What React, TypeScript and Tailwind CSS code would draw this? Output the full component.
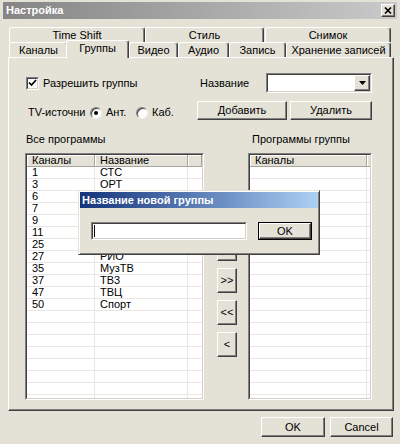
import React from 'react';

const raised =
    'border border-t-white border-l-white border-r-[#404040] border-b-[#404040] shadow-[inset_-1px_-1px_0_#808080]';
const sunkenOuter = 'border border-t-[#808080] border-l-[#808080] border-r-white border-b-white';
const sunkenInner = 'border border-t-[#404040] border-l-[#404040] border-r-[#d4d0c8] border-b-[#d4d0c8]';

// names of rows 6..25 sit under the prompt dialog, so they are left empty
const channels = [
    { num: '1', name: 'СТС' },
    { num: '3', name: 'ОРТ' },
    { num: '6', name: '' },
    { num: '7', name: '' },
    { num: '9', name: '' },
    { num: '11', name: '' },
    { num: '25', name: '' },
    { num: '27', name: 'РИО' },
    { num: '35', name: 'МузТВ' },
    { num: '37', name: 'ТВ3' },
    { num: '47', name: 'ТВЦ' },
    { num: '50', name: 'Спорт' },
];

function Button({ w, h = 'h-[20px]', children }: { w: string; h?: string; children: React.ReactNode }) {
    return (
        <div className={`${w} ${h} ${raised} bg-[#e4e2d7] flex items-center justify-center shrink-0`}>{children}</div>
    );
}

function Tab({ w, selected, children }: { w: string; selected?: boolean; children: React.ReactNode }) {
    return (
        <div
            className={`${w} ${
                selected ? 'h-[18px] -mb-px -mx-[2px] relative z-10 pb-[2px]' : 'h-[15px]'
            } shrink-0 bg-[#e4e2d7] border-t border-l border-r border-t-white border-l-white border-r-[#404040] shadow-[inset_-1px_0_0_#808080] rounded-t-[3px] flex items-center justify-center`}
        >
            {children}
        </div>
    );
}

function Checkbox() {
    return (
        <div className={`w-[13px] h-[13px] ${sunkenOuter} shrink-0`}>
            <div className={`w-full h-full bg-white ${sunkenInner} flex items-center justify-center`}>
                <svg width="9" height="8" viewBox="0 0 9 8">
                    <path d="M1 3.5 L3.5 6 L8 1" fill="none" stroke="#000" strokeWidth="1.7" />
                </svg>
            </div>
        </div>
    );
}

function Radio({ checked }: { checked?: boolean }) {
    return (
        <div className="w-[12px] h-[12px] rounded-full bg-white border border-t-[#808080] border-l-[#808080] border-r-[#f0f0f0] border-b-[#f0f0f0] shadow-[inset_1px_1px_0_#404040] flex items-center justify-center shrink-0">
            {checked && <div className="w-[4px] h-[4px] rounded-full bg-black" />}
        </div>
    );
}

function HeaderCell({ w, children }: { w: string; children?: React.ReactNode }) {
    return (
        <div className={`${w} h-full shrink-0 bg-[#e4e2d7] border-r border-b border-r-[#a8a69c] border-b-[#a8a69c] shadow-[inset_1px_1px_0_white] pl-[5px] flex items-center leading-none`}>
            {children}
        </div>
    );
}

function LeftList() {
    const rows = [...channels, ...Array.from({ length: 8 }, () => ({ num: '', name: '' }))];
    return (
        <div className={`w-[179px] h-full ${sunkenOuter} shrink-0`}>
            <div className={`h-full bg-white ${sunkenInner} overflow-hidden flex flex-col`}>
                <div className="flex h-[12px] shrink-0">
                    <HeaderCell w="w-[68px]">Каналы</HeaderCell>
                    <HeaderCell w="w-[93px]">Название</HeaderCell>
                    <HeaderCell w="flex-1" />
                </div>
                {rows.map((r, i) => (
                    <div key={i} className="flex h-[12px] shrink-0 border-b border-[#e9e7df] leading-[11px]">
                        <div className="w-[68px] pl-[5px] border-r border-[#e9e7df]">{r.num}</div>
                        <div className="w-[93px] pl-[5px] border-r border-[#e9e7df]">{r.name}</div>
                        <div className="flex-1" />
                    </div>
                ))}
            </div>
        </div>
    );
}

function RightList() {
    return (
        <div className={`w-[124px] h-full ${sunkenOuter} shrink-0`}>
            <div className={`h-full bg-white ${sunkenInner} overflow-hidden flex flex-col`}>
                <div className="flex h-[12px] shrink-0">
                    <HeaderCell w="w-[117px]">Каналы</HeaderCell>
                    <HeaderCell w="flex-1" />
                </div>
                {Array.from({ length: 20 }, (_, i) => (
                    <div key={i} className="flex h-[12px] shrink-0 border-b border-[#e9e7df]">
                        <div className="w-[117px] border-r border-[#e9e7df]" />
                        <div className="flex-1" />
                    </div>
                ))}
            </div>
        </div>
    );
}

export default function App() {
    return (
        <div className="relative w-[400px] h-[444px] bg-[#e4e2d7] text-[11px] text-black overflow-hidden font-['Liberation_Sans','DejaVu_Sans',sans-serif]">
            {/* Window title */}
            <div className="mx-[3px] mt-[2px] h-[17px] flex items-center justify-between pl-[3px] pr-[2px] bg-linear-to-r from-[#858585] to-[#cacaca]">
                <span className="font-bold text-white">Настройка</span>
                <div className={`w-[14px] h-[13px] ${raised} bg-[#e4e2d7] flex items-center justify-center`}>
                    <svg width="8" height="7" viewBox="0 0 8 7">
                        <path d="M1 0.5 L7 6.5 M7 0.5 L1 6.5" stroke="#000" strokeWidth="1.6" />
                    </svg>
                </div>
            </div>

            {/* Tabs */}
            <div className="ml-[9px] mt-[8px] flex h-[15px]">
                <Tab w="w-[136px]">Time Shift</Tab>
                <Tab w="w-[119px]">Стиль</Tab>
                <div className="w-px" />
                <Tab w="w-[126px]">Снимок</Tab>
            </div>
            <div className="ml-[9px] flex h-[15px] items-end">
                <Tab w="w-[59px]">Каналы</Tab>
                <Tab w="w-[63px]" selected>
                    Группы
                </Tab>
                <div className="w-[2px]" />
                <Tab w="w-[49px]">Видео</Tab>
                <Tab w="w-[51px]">Аудио</Tab>
                <Tab w="w-[57px]">Запись</Tab>
                <Tab w="w-[105px]">Хранение записей</Tab>
            </div>

            {/* Tab panel */}
            <div className={`ml-[8px] w-[386px] h-[354px] ${raised}`}>
                <div className="mt-[15px] flex items-center h-[20px]">
                    <div className="w-[191px] pl-[17px] flex items-center gap-[4px]">
                        <Checkbox />
                        <span>Разрешить группы</span>
                    </div>
                    <span className="w-[66px]">Название</span>
                    <div className={`w-[106px] h-[20px] ${sunkenOuter}`}>
                        <div className={`h-full bg-white ${sunkenInner} flex justify-end`}>
                            <div className={`w-[16px] h-full ${raised} bg-[#e4e2d7] flex items-center justify-center`}>
                                <svg width="7" height="4" viewBox="0 0 7 4">
                                    <polygon points="0,0 7,0 3.5,4" fill="#000" />
                                </svg>
                            </div>
                        </div>
                    </div>
                </div>

                <div className="mt-[8px] flex items-center h-[19px]">
                    <div className="w-[188px] pl-[19px] pt-[4px] flex items-center">
                        <span className="w-[62px]">TV-источни</span>
                        <Radio checked />
                        <span className="ml-[4px] w-[30px]">Ант.</span>
                        <Radio />
                        <span className="ml-[4px]">Каб.</span>
                    </div>
                    <Button w="w-[90px]" h="h-[19px]">
                        Добавить
                    </Button>
                    <div className="w-[3px]" />
                    <Button w="w-[82px]" h="h-[19px]">
                        Удалить
                    </Button>
                </div>

                <div className="mt-[13px] flex h-[13px] items-center">
                    <div className="w-[243px] pl-[17px]">Все программы</div>
                    <span>Программы группы</span>
                </div>

                <div className="mt-[7px] flex h-[247px] pl-[16px]">
                    <LeftList />
                    <div className="w-[44px] pl-[13px] pt-[83px] flex flex-col gap-[7px]">
                        <Button w="w-[20px]" h="h-[25px]">&gt;</Button>
                        <Button w="w-[20px]" h="h-[25px]">&gt;&gt;</Button>
                        <Button w="w-[20px]" h="h-[25px]">&lt;&lt;</Button>
                        <Button w="w-[20px]" h="h-[25px]">&lt;</Button>
                    </div>
                    <RightList />
                </div>
            </div>

            {/* Dialog buttons */}
            <div className="mt-[6px] flex justify-end gap-[5px] pr-[7px]">
                <Button w="w-[64px]">OK</Button>
                <Button w="w-[63px]">Cancel</Button>
            </div>

            {/* New group prompt */}
            <div className="absolute left-[78px] top-[190px] w-[242px] h-[65px] bg-[#e4e2d7] border border-t-[#e4e2d7] border-l-[#e4e2d7] border-r-[#404040] border-b-[#404040] shadow-[inset_1px_1px_0_white,inset_-1px_-1px_0_#808080]">
                <div className="mx-[1px] mt-[1px] h-[16px] pl-[2px] flex items-center bg-linear-to-r from-[#15337a] to-[#aed0f4]">
                    <span className="font-bold text-white">Название новой группы</span>
                </div>
                <div className="mt-[14px] ml-[12px] flex">
                    <div className={`w-[156px] h-[18px] ${sunkenOuter}`}>
                        <div className={`h-full bg-white ${sunkenInner} pl-[1px] flex items-center`}>
                            <div className="w-px h-[12px] bg-black" />
                        </div>
                    </div>
                    <div className="ml-[11px] w-[54px] h-[18px] border border-black">
                        <div className={`h-full ${raised} bg-[#e4e2d7] flex items-center justify-center`}>OK</div>
                    </div>
                </div>
            </div>
        </div>
    );
}
